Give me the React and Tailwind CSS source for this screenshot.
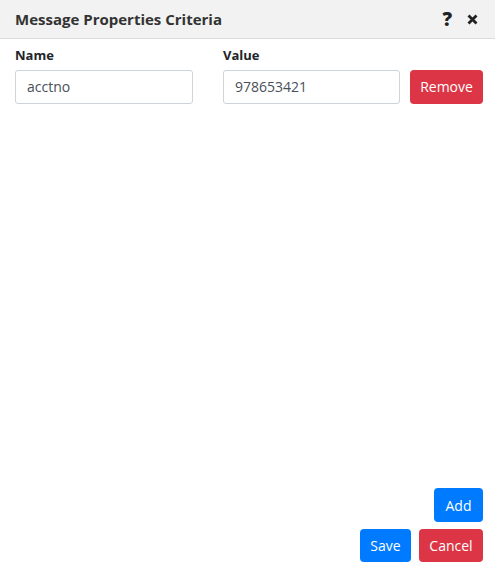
export default function App() {
  return (
    <div className="w-[495px] h-[569px] bg-white flex flex-col text-[#212529]" style={{ fontFamily: '"Open Sans", "Noto Sans", sans-serif' }}>
      {/* Title bar */}
      <div className="h-[39px] bg-[#f2f2f2] border-b border-[#dcdcdc] flex items-center justify-between pl-[15px] pr-[17px] flex-shrink-0">
        <h1 className="font-bold text-[15px] text-[#333]">Message Properties Criteria</h1>
        <div className="flex items-center gap-[15px] text-[#222]">
          <span className="font-black text-[19px] leading-none">?</span>
          <svg width="11" height="11" viewBox="0 0 11 11">
            <path d="M1.5 1.5 L9.5 9.5 M9.5 1.5 L1.5 9.5" stroke="#222" strokeWidth="2.8" strokeLinecap="butt" />
          </svg>
        </div>
      </div>

      {/* Body */}
      <div className="flex-1 flex flex-col pl-[15px] pr-[12px] pt-[7px]">
        <div className="flex items-end">
          <div className="w-[178px] flex flex-col">
            <label className="font-bold text-[13px] mb-[4px]">Name</label>
            <input
              defaultValue="acctno"
              className="h-[34px] border border-[#ced4da] rounded-[3px] px-[11px] text-[14px] text-[#495057] outline-none"
            />
          </div>
          <div className="w-[177px] flex flex-col ml-[30px]">
            <label className="font-bold text-[13px] mb-[4px]">Value</label>
            <input
              defaultValue="978653421"
              className="h-[34px] border border-[#ced4da] rounded-[3px] px-[11px] text-[14px] text-[#495057] outline-none"
            />
          </div>
          <button className="ml-[10px] w-[73px] h-[34px] bg-[#dc3545] rounded-[4px] text-white text-[14px]">Remove</button>
        </div>

        <div className="flex-1" />

        <div className="flex justify-end">
          <button className="w-[49px] h-[34px] bg-[#007bff] rounded-[4px] text-white text-[14px]">Add</button>
        </div>
        <div className="flex justify-end gap-[8px] mt-[7px] mb-[7px]">
          <button className="w-[51px] h-[33px] bg-[#007bff] rounded-[4px] text-white text-[14px]">Save</button>
          <button className="w-[64px] h-[33px] bg-[#dc3545] rounded-[4px] text-white text-[14px]">Cancel</button>
        </div>
      </div>
    </div>
  );
}
